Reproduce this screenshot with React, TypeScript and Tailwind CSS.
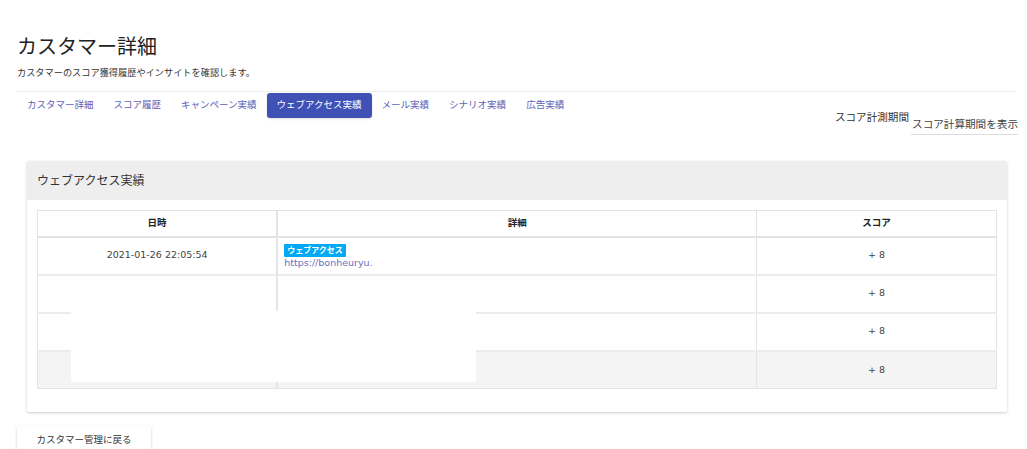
import React from "react";

const tabs = [
  "カスタマー詳細",
  "スコア履歴",
  "キャンペーン実績",
  "ウェブアクセス実績",
  "メール実績",
  "シナリオ実績",
  "広告実績",
];

const rows = [
  { date: "2021-01-26 22:05:54", url: "https://bonheuryu.", score: "+ 8" },
  { date: "", url: "", score: "+ 8" },
  { date: "", url: "", score: "+ 8" },
  { date: "", url: "", score: "+ 8" },
];

export default function App() {
  return (
    <div
      className="relative min-h-screen bg-white pl-[17px] pr-[10px] pt-[34px] text-[#333]"
      style={{ fontFamily: '"DejaVu Sans", "Noto Sans CJK JP", sans-serif' }}
    >
      <h1 className="text-[20px] leading-[26px] font-normal text-[#222]">カスタマー詳細</h1>
      <p className="mt-[6px] text-[9.2px] leading-[14px] text-[#333]">
        カスタマーのスコア獲得履歴やインサイトを確認します。
      </p>

      <div className="mt-[11px] flex justify-between border-t border-[#eee] pt-[1px] mr-[2px]">
        <nav className="flex">
          {tabs.map((t, i) => (
            <span
              key={t}
              className={
                i === 3
                  ? "flex h-[25px] items-center rounded-[3px] bg-[#3f51b5] px-[10px] text-[9.5px] text-white shadow-sm"
                  : "flex h-[25px] items-center px-[10px] text-[9.5px] text-[#5c63b8]"
              }
            >
              {t}
            </span>
          ))}
        </nav>
        <div className="mr-[-3px] mt-[17px] flex items-start">
          <span className="text-[10.6px] leading-[14px] text-[#333]">スコア計測期間</span>
          <span className="ml-[2px] mt-[7px] border-b border-[#ddd] pb-[3px] pl-[1px] text-[10.6px] leading-[14px] text-[#444]">
            スコア計算期間を表示
          </span>
        </div>
      </div>

      <div className="mx-[10px] mt-[26px] rounded-[2px] bg-white shadow-[0_1px_3px_rgba(0,0,0,0.2)]">
        <div className="flex h-[39px] items-center rounded-t-[2px] bg-[#eeeeee] px-[10px] text-[12px] text-[#333]">
          ウェブアクセス実績
        </div>
        <div className="px-[10px] pb-[23px] pt-[10px]">
          <table className="w-full table-fixed border-collapse border border-[#e3e3e3] text-[9.5px]">
            <colgroup>
              <col className="w-1/4" />
              <col className="w-1/2" />
              <col className="w-1/4" />
            </colgroup>
            <thead>
              <tr className="h-[26px] border-b-2 border-[#e3e3e3]">
                <th className="border-r-2 border-[#e3e3e3] font-bold text-[#222]">日時</th>
                <th className="border-r border-[#e3e3e3] font-bold text-[#222]">詳細</th>
                <th className="font-bold text-[#222]">スコア</th>
              </tr>
            </thead>
            <tbody>
              {rows.map((r, i) => (
                <tr
                  key={i}
                  className={
                    i === 3
                      ? "h-[38px] border-b border-[#e3e3e3] bg-[#f4f4f4]"
                      : "h-[38px] border-b-2 border-[#ececec]"
                  }
                >
                  <td className="border-r-2 border-[#e6e6e6] text-center text-[#444]">{r.date}</td>
                  <td className="border-r border-[#e3e3e3] pl-[6px] align-top">
                    {r.url && (
                      <div className="pt-[5px]">
                        <span className="inline-block rounded-[1px] bg-[#03a9f4] px-[3px] text-[8px] font-bold leading-[13px] text-white">
                          ウェブアクセス
                        </span>
                        <div className="text-[9.5px] leading-[12px] text-[#6a6fc0]">{r.url}</div>
                      </div>
                    )}
                  </td>
                  <td className="text-center text-[#444]">{r.score}</td>
                </tr>
              ))}
            </tbody>
          </table>
        </div>
      </div>

      <button className="mt-[14px] h-[28px] w-[134px] rounded-[2px] bg-white text-[9.5px] text-[#333] shadow-[0_1px_3px_rgba(0,0,0,0.2)]">
        カスタマー管理に戻る
      </button>

      <div className="absolute left-[71px] top-[311px] h-[71px] w-[405px] bg-white" />
    </div>
  );
}
